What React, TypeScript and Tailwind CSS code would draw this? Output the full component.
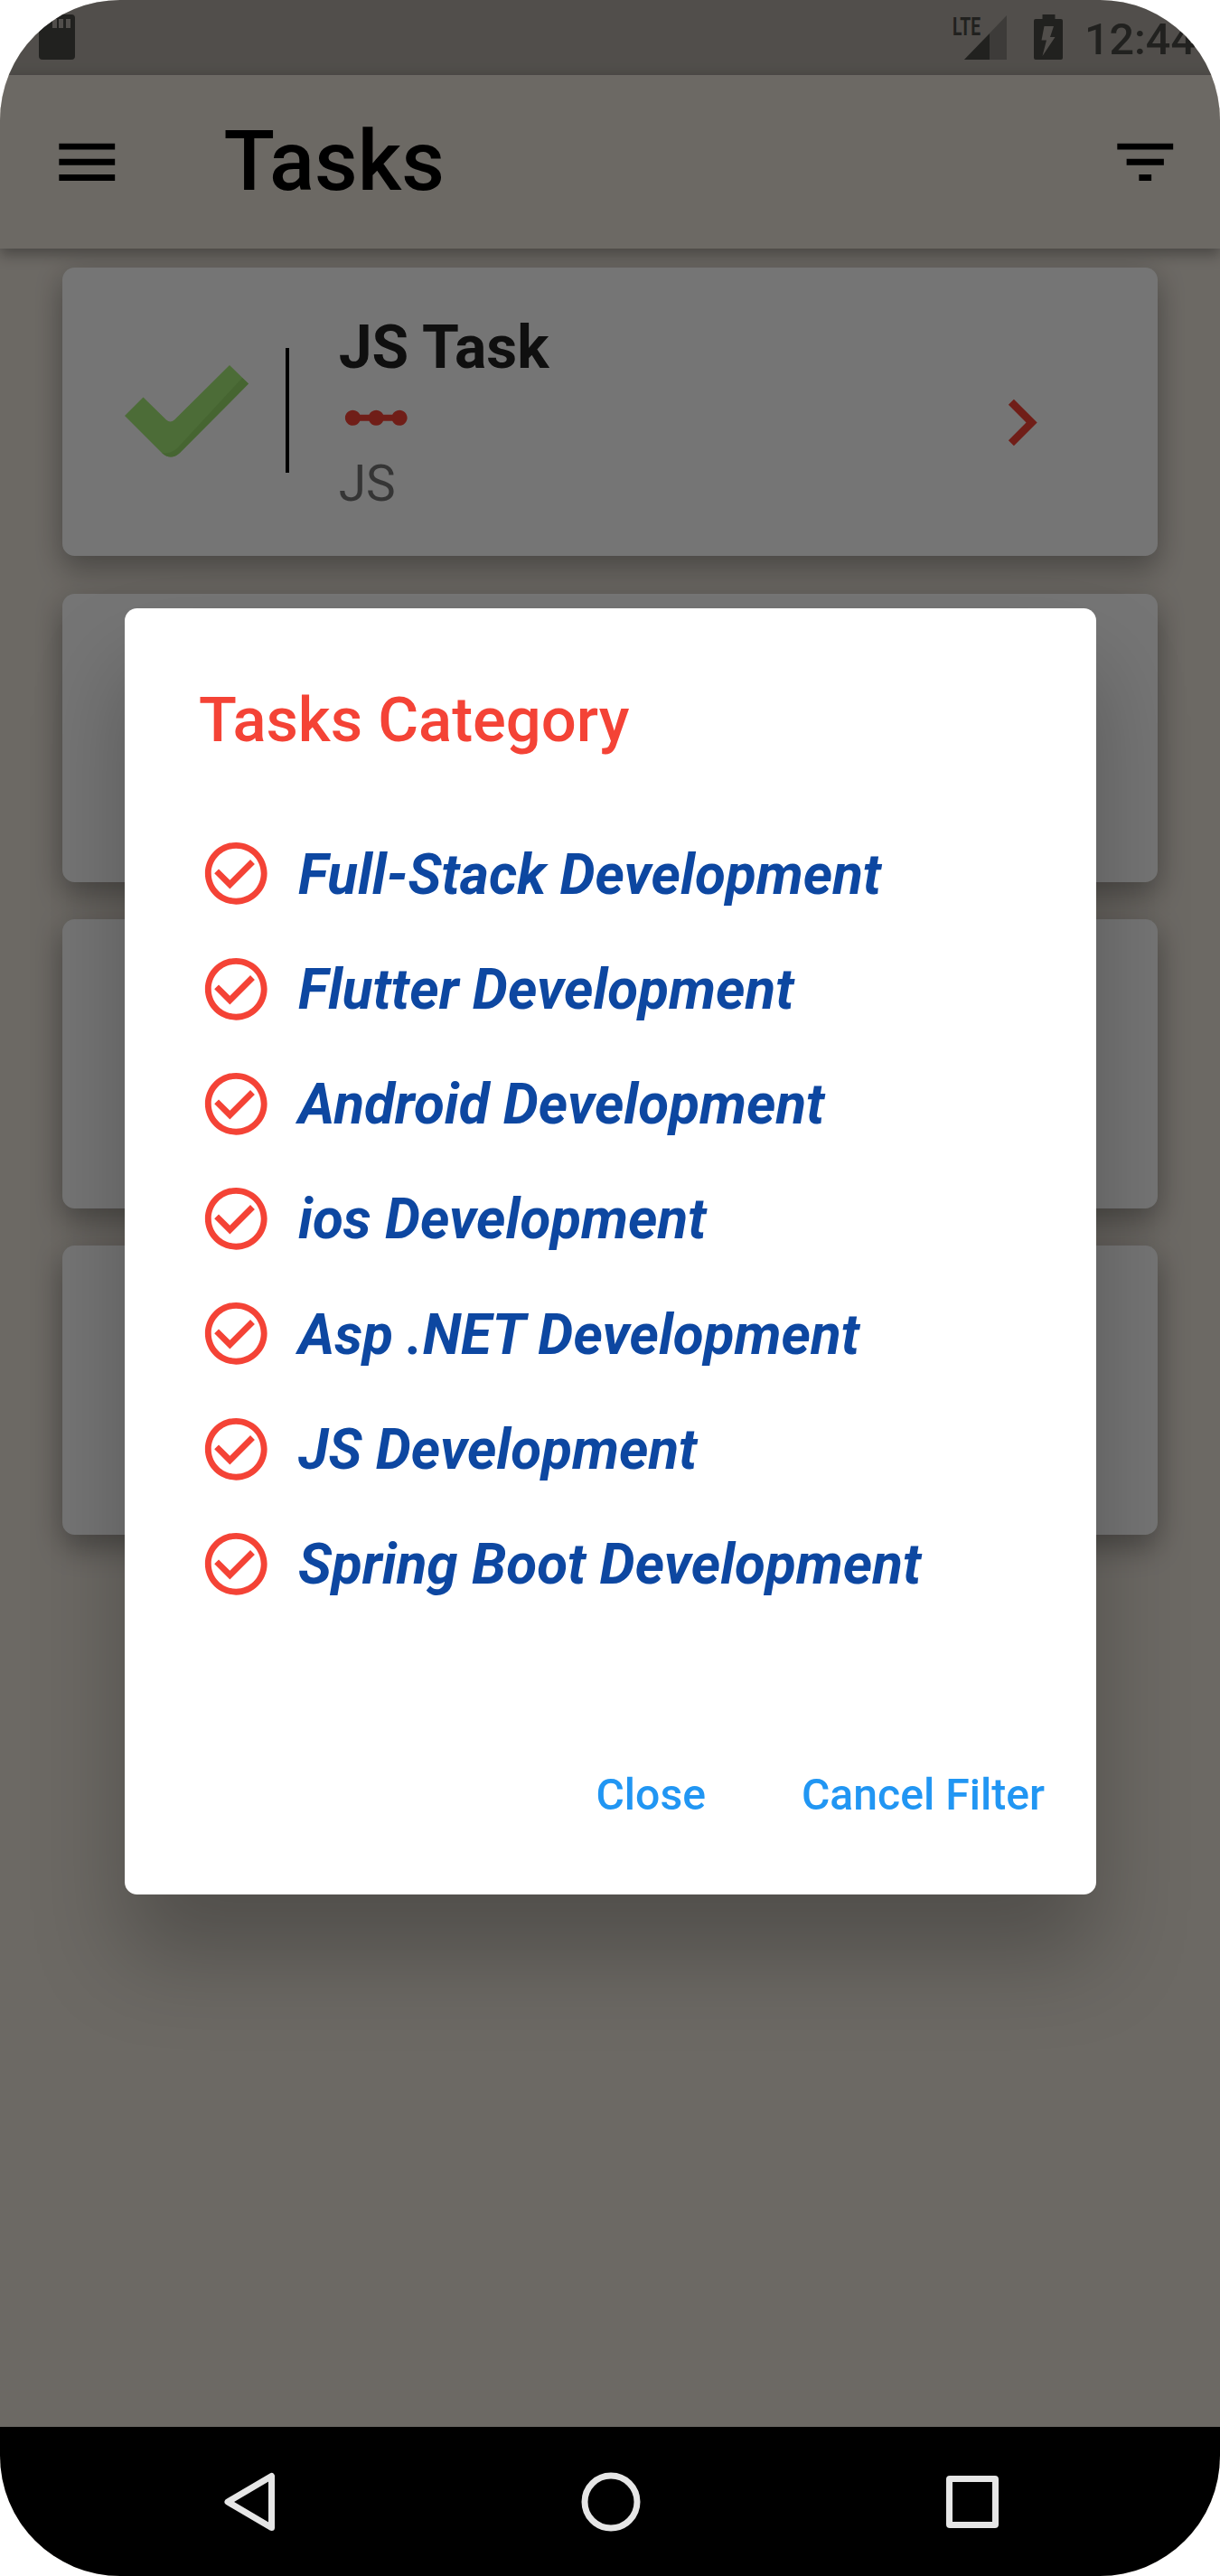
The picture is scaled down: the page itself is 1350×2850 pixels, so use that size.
import React from 'react';

const categories = [
  'Full-Stack Development',
  'Flutter Development',
  'Android Development',
  'ios Development',
  'Asp .NET Development',
  'JS Development',
  'Spring Boot Development',
];

function StatusBar() {
  return (
    <div className="flex h-[83px] shrink-0 items-start justify-between bg-black/25 pl-[43px] text-[#494844]">
      <svg className="mt-[16px] h-[50px] w-[40px]" viewBox="0 0 40 50">
        <path
          fillRule="evenodd"
          fill="currentColor"
          d="M15 0h21q4 0 4 4v42q0 4-4 4H4q-4 0-4-4V16zM15 5v10h5V5zM22 5v10h5V5zM30 5v10h5V5z"
        />
      </svg>
      <div className="flex items-start">
        <svg className="mt-[10px] h-[56px] w-[65px]" viewBox="-4 -6 65 56">
          <path d="M60 1v49H13z" fill="#85827c" />
          <path d="M41 21.200V50H13z" fill="currentColor" />
          <text
            x="0"
            y="23"
            fill="currentColor"
            fontFamily="Roboto"
            fontWeight="700"
            fontSize="28.500"
            textLength="31"
            lengthAdjust="spacingAndGlyphs"
          >
            LTE
          </text>
        </svg>
        <svg className="mt-[16px] ml-[29px] h-[50px] w-[32px]" viewBox="0 0 32 50">
          <path
            fillRule="evenodd"
            fill="currentColor"
            d="M9.500 0h14v5H30q2 0 2 2v41q0 2-2 2H2q-2 0-2-2V7q0-2 2-2h7.500zM11.500 13L8.500 28.500h5.500L9.500 46 23.500 25H18l4-12z"
          />
        </svg>
        <span className="mt-[15.500px] mr-[27px] ml-[24px] text-[48.5px] leading-[56px] font-medium">12:44</span>
      </div>
    </div>
  );
}

function AppBar() {
  return (
    <header className="relative z-10 flex h-[192px] shrink-0 items-center bg-[#ebe4da] px-[55px] pr-[42px] shadow-[0_8px_14px_rgba(0,0,0,0.25),0_0_14px_rgba(0,0,0,0.1)]">
      <svg className="size-[82.5px]" viewBox="0 0 24 24">
        <path d="M3 18h18v-2H3v2zm0-5h18v-2H3v2zm0-7v2h18V6H3z" />
      </svg>
      <h1 className="ml-[110px] flex-1 text-[92.8px] leading-none font-medium text-black">Tasks</h1>
      <svg className="size-[82.5px]" viewBox="0 0 24 24">
        <path d="M10 18h4v-2h-4v2zM3 6v2h18V6H3zm3 7h12v-2H6v2z" />
      </svg>
    </header>
  );
}

function Card({ children }: { children?: React.ReactNode }) {
  return (
    <div className="flex h-[319.7px] shrink-0 items-center rounded-[13.75px] bg-white shadow-[0_18px_30px_rgba(0,0,0,0.24),0_0_34px_rgba(0,0,0,0.12)]">
      {children}
    </div>
  );
}

function JsTask() {
  return (
    <>
      <svg className="ml-[69px] h-[102px] w-[137px]" viewBox="0 0 137 102">
        <path
          d="M0 56L20.500 35.500 46 60.500q4.500 4 9 0L116 0l21 20.500L61 97q-10 9-20 0z"
          fill="#a5eb78"
        />
        <path d="M130 14l7 6.500L61 97q-10 9-20 0 9 2 17-5z" fill="#98dc6c" />
      </svg>
      <div className="mb-[2px] ml-[41px] h-[138px] w-[4px] bg-black" />
      <div className="ml-[55px] flex flex-col pt-[1px]">
        <div className="pt-[5px] text-[66px] leading-[71.5px] font-bold text-black/87">JS Task</div>
        <svg className="size-[82.5px]" viewBox="0 0 24 24">
          <path
            fill="#f44336"
            d="M19.500 9.500c-1.030 0-1.900.62-2.290 1.500h-2.920C13.900 10.120 13.030 9.500 12 9.500s-1.900.62-2.290 1.500H6.790C6.400 10.120 5.530 9.500 4.500 9.500 3.120 9.500 2 10.620 2 12s1.120 2.500 2.500 2.500c1.030 0 1.900-.62 2.290-1.500h2.920c.39.88 1.260 1.500 2.290 1.500s1.900-.62 2.290-1.500h2.920c.39.88 1.260 1.500 2.290 1.500 1.380 0 2.500-1.120 2.500-2.500s-1.120-2.500-2.500-2.500z"
          />
        </svg>
        <div className="text-[55px] leading-[64.5px] text-black/54">JS</div>
      </div>
      <svg className="mt-[24px] mr-[99px] ml-auto size-[103px]" viewBox="0 0 24 24">
        <path fill="#f44336" d="M8.590 16.590L13.170 12 8.590 7.410 10 6l6 6-6 6z" />
      </svg>
    </>
  );
}

function CategoryRow({ label }: { label: string }) {
  return (
    <li className="flex h-[127.25px] items-center">
      <svg className="size-[82.5px] shrink-0" viewBox="0 0 24 24">
        <path
          fill="#f44336"
          d="M16.590 7.580L10 14.170l-3.590-3.580L5 12l5 5 8-8zM12 2C6.480 2 2 6.480 2 12s4.480 10 10 10 10-4.480 10-10S17.520 2 12 2zm0 18c-4.420 0-8-3.580-8-8s3.580-8 8-8 8 3.580 8 8-3.580 8-8 8z"
        />
      </svg>
      <span className="ml-[27.5px] pt-[2px] text-[61.95px] leading-[72px] font-bold whitespace-nowrap text-[#0d47a1] italic">
        {label}
      </span>
    </li>
  );
}

function CategoryDialog() {
  return (
    <div
      role="dialog"
      className="mt-[672.5px] flex h-[1423px] w-[1075px] flex-col rounded-[13.75px] bg-white px-[82.5px] pt-[84px] shadow-[0_68px_100px_rgba(0,0,0,0.25)]"
    >
      <h2 className="text-[68.75px] leading-[80px] font-medium text-[#f44336]">Tasks Category</h2>
      <ul className="mt-[66.5px]">
        {categories.map((label) => (
          <CategoryRow key={label} label={label} />
        ))}
      </ul>
      <div className="mt-[164.5px] -mr-[26px] flex justify-end gap-[106px] text-[48.125px] leading-[56px] font-medium text-[#2196f3]">
        <button>Close</button>
        <button>Cancel Filter</button>
      </div>
    </div>
  );
}

function NavigationBar() {
  return (
    <nav className="flex h-[165px] shrink-0 items-center justify-between bg-black pr-[245px] pl-[248px]">
      <svg className="h-[66px] w-[57px]" viewBox="0 0 57 66" fill="none" stroke="#e6e6e6" strokeWidth="7" strokeLinejoin="round">
        <path d="M52.500 4.500v57L4 33z" />
      </svg>
      <svg className="size-[66px]" viewBox="0 0 66 66" fill="none" stroke="#e6e6e6" strokeWidth="7">
        <circle cx="33" cy="33" r="29" />
      </svg>
      <div className="size-[58px] rounded-[4px] border-[7px] border-[#e6e6e6]" />
    </nav>
  );
}

export default function App() {
  return (
    <div className="h-[2850px] w-[1350px] bg-white font-['Roboto',sans-serif]">
      <div className="relative flex h-full flex-col overflow-hidden rounded-[133px] bg-[#ebe4da]">
        <StatusBar />
        <AppBar />
        <main className="flex flex-1 flex-col gap-[41.25px] px-[68.75px] pt-[20.6px]">
          <Card>
            <JsTask />
          </Card>
          <Card />
          <Card />
          <Card />
        </main>
        <NavigationBar />
        <div className="absolute inset-x-0 top-0 z-20 flex h-[2685px] justify-center bg-black/54">
          <CategoryDialog />
        </div>
      </div>
    </div>
  );
}
